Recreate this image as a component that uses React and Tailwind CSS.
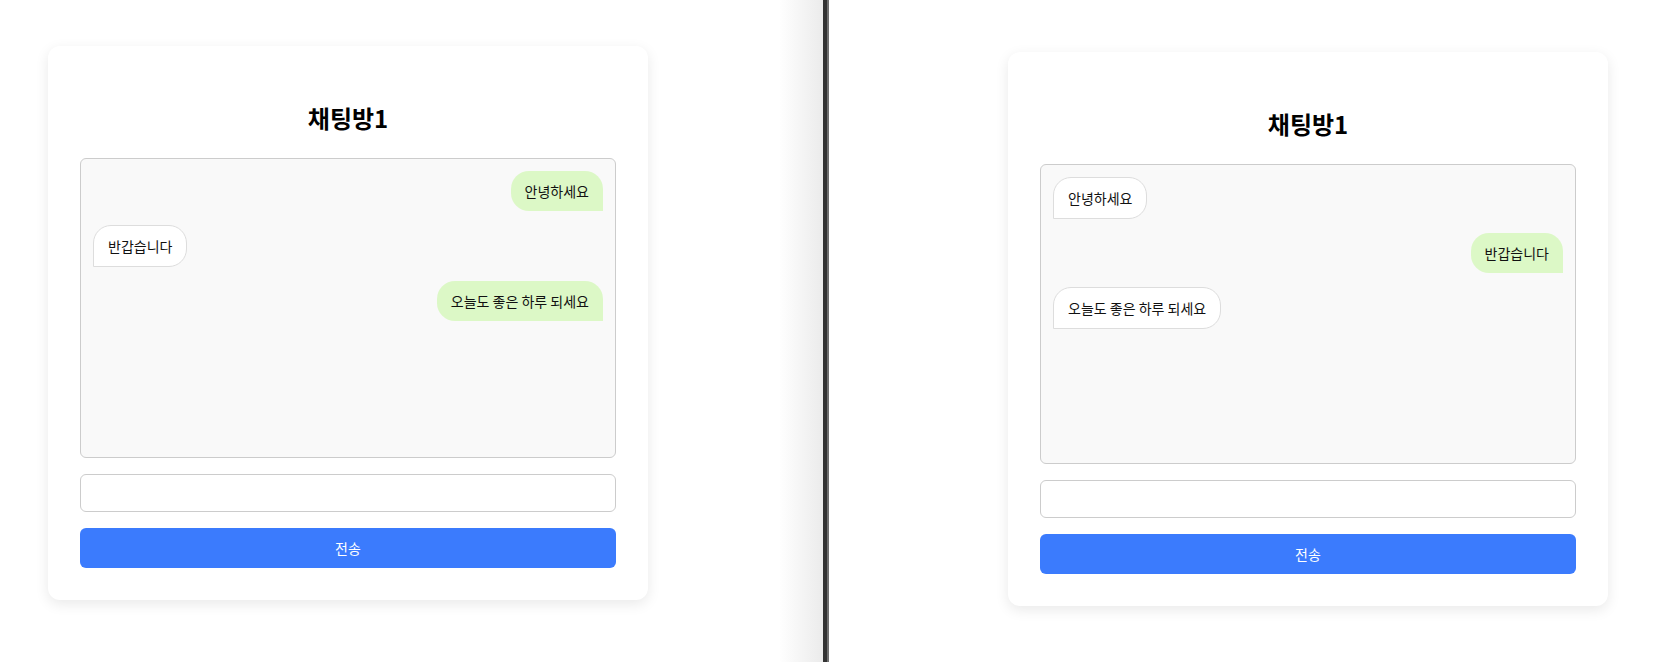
const font = { fontFamily: '"Noto Sans CJK KR", "Noto Sans", sans-serif' };

function Bubble({ mine, text }) {
  if (mine) {
    return (
      <div className="flex justify-end">
        <div className="rounded-[18px] rounded-br-none bg-[#dcf8c6] px-[14px] py-[10px] text-sm leading-5 text-[#111]">{text}</div>
      </div>
    );
  }
  return (
    <div className="flex justify-start">
      <div className="rounded-[18px] rounded-bl-none border border-[#ddd] bg-white px-[14px] py-[10px] text-sm leading-5 text-[#111]">{text}</div>
    </div>
  );
}

function ChatRoom({ messages }) {
  return (
    <div className="w-[600px] rounded-xl bg-white p-8 shadow-[0_4px_14px_rgba(0,0,0,0.09)]">
      <h2 className="my-6 text-center text-2xl leading-8 font-bold text-black">채팅방1</h2>
      <div className="flex h-[300px] flex-col gap-[14px] rounded-md border border-[#ccc] bg-[#f9f9f9] p-3">
        {messages.map((m, i) => (
          <Bubble key={i} mine={m.mine} text={m.text} />
        ))}
      </div>
      <input className="mt-4 block h-[38px] w-full rounded-md border border-[#ccc] bg-white px-3 text-sm outline-none" />
      <button className="mt-4 block h-10 w-full rounded-md bg-[#3b7bfd] text-sm text-white">전송</button>
    </div>
  );
}

export default function App() {
  const left = [
    { mine: true, text: '안녕하세요' },
    { mine: false, text: '반갑습니다' },
    { mine: true, text: '오늘도 좋은 하루 되세요' },
  ];
  const right = [
    { mine: false, text: '안녕하세요' },
    { mine: true, text: '반갑습니다' },
    { mine: false, text: '오늘도 좋은 하루 되세요' },
  ];

  return (
    <div className="flex h-[662px] w-full overflow-hidden bg-white" style={font}>
      <div className="w-[823px] shrink-0 bg-[linear-gradient(to_right,#ffffff_calc(100%-44px),#ebebeb)] pt-[46px] pl-12">
        <ChatRoom messages={left} />
      </div>
      <div className="w-1 shrink-0 bg-[#333]" />
      <div className="w-[2px] shrink-0 bg-[#6f6f6f]" />
      <div className="flex-1 bg-white pt-[52px] pl-[179px]">
        <ChatRoom messages={right} />
      </div>
    </div>
  );
}
